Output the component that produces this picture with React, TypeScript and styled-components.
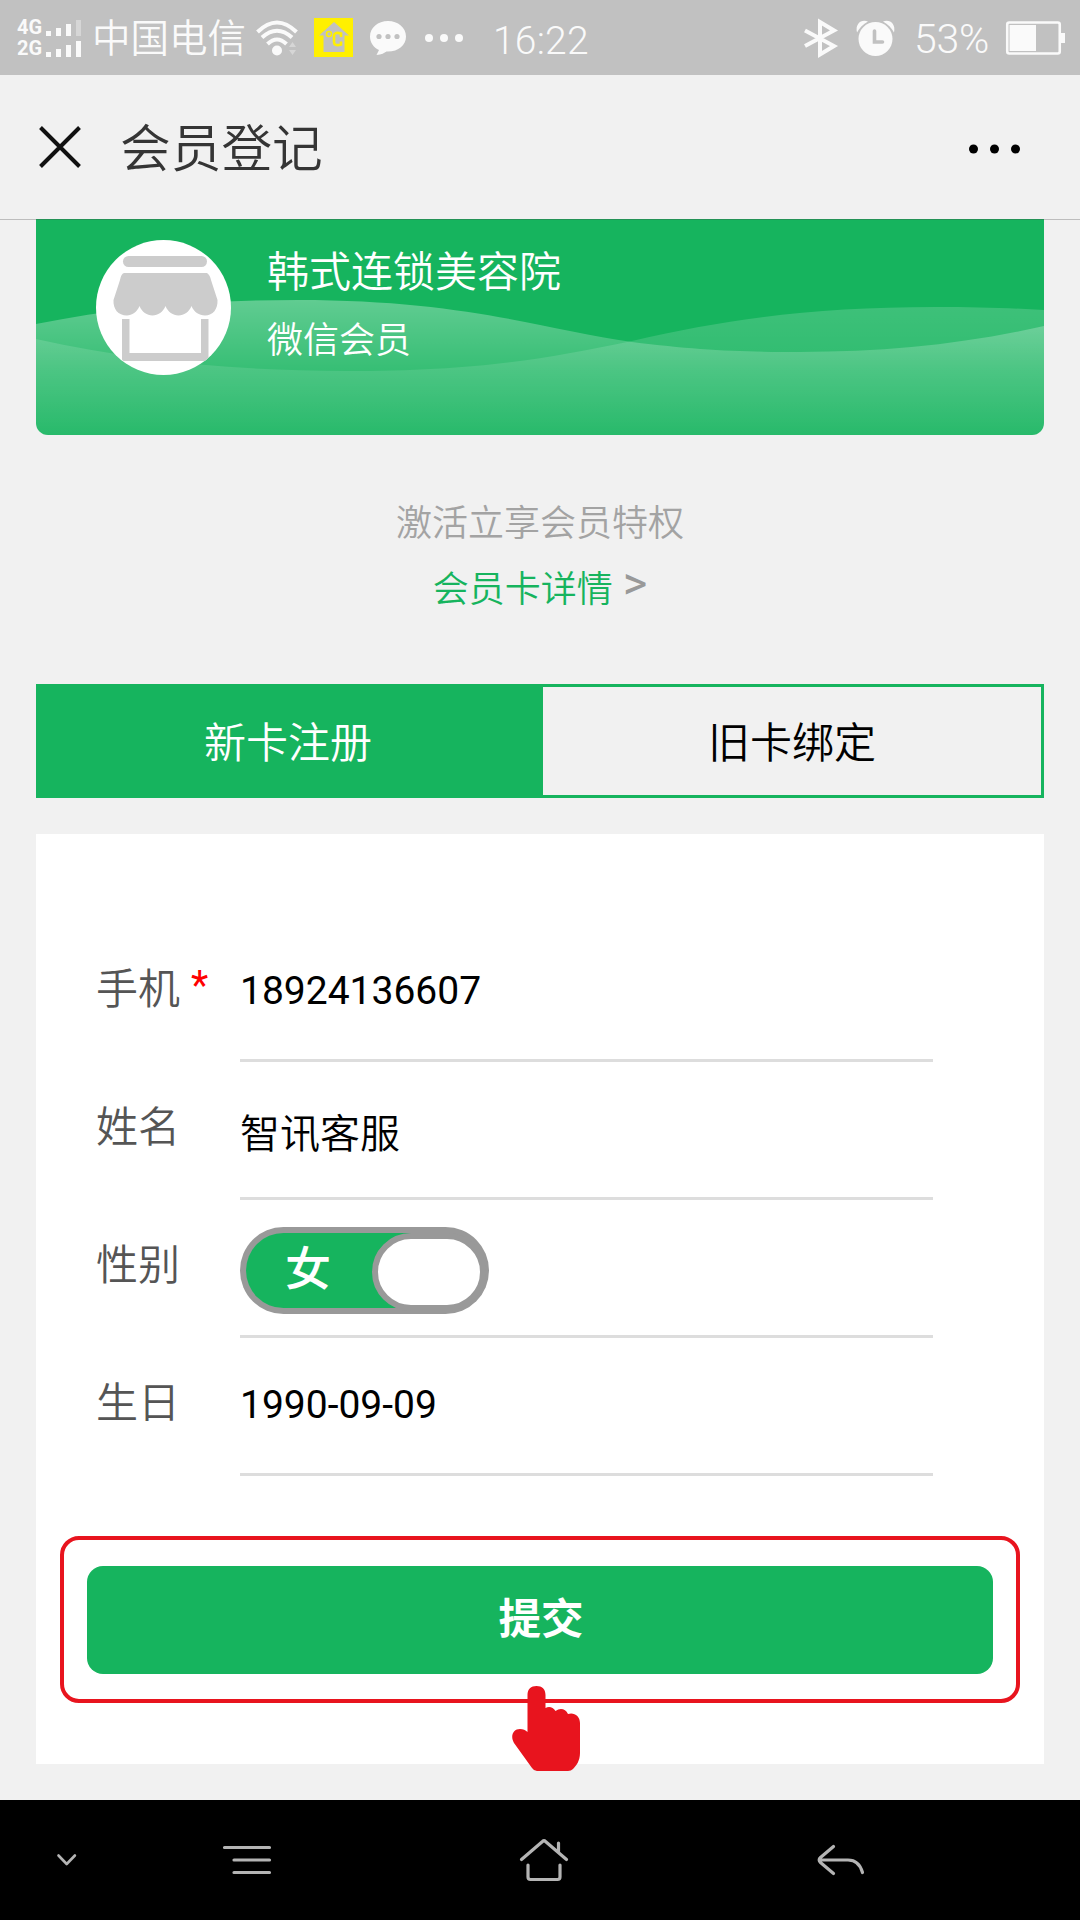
import React from "react";
import styled, { createGlobalStyle, css } from "styled-components";

const GREEN = "#16b45e";
const CJK = `"Noto Sans CJK SC", sans-serif`;
const LATIN = `Roboto, "Noto Sans CJK SC", sans-serif`;

const GlobalStyle = createGlobalStyle`
  * { box-sizing: border-box; }
  body { margin: 0; background: #f1f1f1; font-family: ${CJK}; }
`;

const Screen = styled.div`
  width: 1080px;
  height: 1920px;
  display: flex;
  flex-direction: column;
  background: #f1f1f1;
  overflow: hidden;
`;

const StatusBar = styled.div`
  height: 75px;
  flex: none;
  display: flex;
  align-items: center;
  justify-content: space-between;
  padding: 0 15px 0 17px;
  background: #c1c1c1;
  color: #fafafa;
`;

const StatusGroup = styled.div`
  display: flex;
  align-items: center;
  height: 75px;
`;

const Signals = styled.div`
  display: flex;
  flex-direction: column;
  gap: 4px;
  width: 75px;
`;

const Signal = styled.div`
  display: flex;
  align-items: flex-end;
  height: 17px;
`;

const Network = styled.span`
  width: 29px;
  font: 700 20px/17px ${LATIN};
`;

const Bar = styled.i<{ $h: number; $dim?: boolean }>`
  width: 5px;
  height: ${(p) => p.$h}px;
  margin-right: 5px;
  flex: none;
  background: ${(p) => (p.$dim ? "#d6d6d6" : "#fafafa")};
`;

const Carrier = styled.span`
  font-size: 38.5px;
  line-height: 53px;
  width: 164px;
  height: 58px;
  font-weight: 350;
`;

const Icon = styled.svg<{ $ml?: number }>`
  display: block;
  flex: none;
  margin-left: ${(p) => p.$ml ?? 0}px;
  overflow: visible;
`;

const Clock = styled.span`
  margin-left: 30px;
  padding-top: 6px;
  font: 300 39px/46px ${LATIN};
  letter-spacing: 0.2px;
`;

const Percent = styled.span`
  width: 92px;
  margin-left: 19px;
  padding-top: 3px;
  font: 300 41px/46px ${LATIN};
  letter-spacing: -0.3px;
`;

const Header = styled.header`
  position: relative;
  z-index: 1;
  height: 144px;
  flex: none;
  display: flex;
  align-items: center;
  padding: 0 60px 0 39px;
  box-shadow: 0 1px 0 rgba(70, 70, 70, 0.3);
`;

const Title = styled.h1`
  margin: -5px auto 0 39px;
  font-size: 50.7px;
  line-height: 72px;
  font-weight: 350;
  color: #353535;
`;

const Content = styled.main`
  flex: 1;
  padding: 0 36px;
`;

const MemberCard = styled.section`
  position: relative;
  height: 216px;
  display: flex;
  gap: 36px;
  padding: 21px 60px 0;
  background: ${GREEN};
  border-radius: 0 0 12px 12px;
  overflow: hidden;
`;

const Waves = styled.svg`
  position: absolute;
  left: 0;
  top: 1px;
`;

const Avatar = styled.div`
  position: relative;
  width: 135px;
  height: 135px;
  flex: none;
  border-radius: 50%;
  background: #fff;
  overflow: hidden;
`;

const CardText = styled.div`
  position: relative;
  margin-top: -1px;
  color: #fff;
  font-weight: 350;
`;

const ShopName = styled.div`
  font-size: 42px;
  line-height: 60px;
`;

const MemberType = styled.div`
  margin-top: 12px;
  font-size: 36px;
  line-height: 52px;
`;

const Promo = styled.div`
  display: flex;
  flex-direction: column;
  align-items: center;
  height: 249px;
  padding-top: 59px;
  font-size: 36px;
  line-height: 52px;
  font-weight: 350;
  color: #a3a3a3;
`;

const DetailLink = styled.a`
  display: flex;
  gap: 10px;
  margin-top: 14px;
  color: ${GREEN};
`;

const Arrow = styled.span`
  font: 400 47px/46px ${LATIN};
  color: #999;
`;

const Tabs = styled.div`
  display: flex;
  height: 114px;
  border: 3px solid ${GREEN};
`;

const Tab = styled.button<{ $active?: boolean }>`
  flex: ${(p) => (p.$active ? "0 0 504px" : "1")};
  border: 0;
  padding: ${(p) => (p.$active ? "0 6px 2px 0" : "0 0 2px")};
  font: 350 42px/60px ${CJK};
  ${(p) =>
    p.$active
      ? css`
          background: ${GREEN};
          color: #fff;
        `
      : css`
          background: transparent;
          color: #000;
        `}
`;

const Form = styled.form`
  height: 930px;
  margin-top: 36px;
  padding: 90px 24px 0;
  background: #fff;
`;

const Field = styled.div`
  display: flex;
  height: 138px;
  padding: 0 87px 0 36px;
`;

const Label = styled.label`
  width: 144px;
  flex: none;
  display: flex;
  gap: 11px;
  padding-top: 32px;
  font-size: 42px;
  line-height: 60px;
  font-weight: 350;
  color: #555;
`;

const Required = styled.span`
  font: 400 40px/60px ${LATIN};
  color: #f00;
`;

const Control = styled.div`
  flex: 1;
  border-bottom: 3px solid #ddd;
`;

const Value = styled.div<{ $cjk?: boolean }>`
  padding-top: ${(p) => (p.$cjk ? 40 : 43)}px;
  font: ${(p) => (p.$cjk ? `350 40px/58px ${CJK}` : `400 39px/48px ${LATIN}`)};
  color: #000;
`;

const Toggle = styled.div`
  width: 249px;
  height: 87px;
  margin-top: 27px;
  padding: 6px 3px 3px 6px;
  border-radius: 44px;
  background: #999;
`;

const ToggleTrack = styled.div`
  display: flex;
  justify-content: space-between;
  width: 240px;
  height: 75px;
  padding-left: 39px;
  border-radius: 38px;
  background: linear-gradient(90deg, ${GREEN} 165px, #999 165px);
  color: #fff;
  font-size: 46px;
  line-height: 64px;
  font-weight: 500;
`;

const Knob = styled.div`
  width: 114px;
  height: 78px;
  border: 6px solid #999;
  border-radius: 39px;
  background: #fff;
`;

const SubmitFrame = styled.div`
  position: relative;
  height: 167px;
  margin-top: 60px;
  padding: 26px 23px;
  border: 4px solid #e8141e;
  border-radius: 19px;
`;

const Submit = styled.button`
  display: block;
  width: 100%;
  height: 108px;
  border: 0;
  border-radius: 16px;
  padding: 0 0 9px 2px;
  background: ${GREEN};
  color: #fff;
  font: 700 42.5px/60px ${CJK};
`;

const Pointer = styled.svg`
  position: absolute;
  left: 448px;
  top: 146px;
`;

const NavBar = styled.nav`
  height: 120px;
  flex: none;
  display: flex;
  align-items: center;
  padding-left: 57px;
  background: #000;
  fill: none;
  stroke: #b4b4b4;
  stroke-width: 3.2;
  stroke-linecap: round;
  stroke-linejoin: round;
`;

export default function App() {
  return (
    <Screen>
      <GlobalStyle />
      <StatusBar>
        <StatusGroup>
          <Signals>
            <Signal>
              <Network>4G</Network>
              <Bar $h={5} />
              <Bar $h={8} />
              <Bar $h={12} />
              <Bar $h={16} $dim />
            </Signal>
            <Signal>
              <Network>2G</Network>
              <Bar $h={5} />
              <Bar $h={8} />
              <Bar $h={12} />
              <Bar $h={16} />
            </Signal>
          </Signals>
          <Carrier>中国电信</Carrier>
          <Icon width="42" height="36" viewBox="0 0 42 36" fill="none" stroke="#fafafa" strokeWidth="4">
            <path d="M1.500 12Q21-7 40.500 12M6 17.500Q21 4 36 17.500M11.500 24Q21 15 30.500 24" />
            <circle cx="21" cy="30.500" r="5" fill="#fafafa" stroke="none" />
            <path d="M33 27l3.500-5 3.500 5zM33 30l3.500 5 3.500-5z" fill="#d6d6d6" stroke="none" />
          </Icon>
          <Icon $ml={16} width="39" height="39" viewBox="0 0 39 39">
            <rect width="39" height="39" fill="#fff000" />
            <path d="M20 4L35 17.500H30.500V34H9.500V17.500H5z" fill="#c1c1c1" />
            <circle cx="15" cy="16" r="2.500" fill="none" stroke="#fff000" strokeWidth="1.500" />
            <path d="M27 19v-3.500q-7-2-7 2.500v6q0 4.500 7 2.500v-3" fill="none" stroke="#fff000" strokeWidth="2.600" />
          </Icon>
          <Icon $ml={17} width="36" height="36" viewBox="0 0 36 36">
            <path d="M18 1C8 1 0 7.500 0 16.500c0 6 3.500 11 9 13.500l-2.500 5c5-.5 8-2 10-3.500C28 32 36 25.500 36 16.500 36 7.500 28 1 18 1z" fill="#fafafa" />
            <g fill="#c1c1c1">
              <circle cx="9" cy="16.500" r="2.600" />
              <circle cx="18" cy="16.500" r="2.600" />
              <circle cx="27" cy="16.500" r="2.600" />
            </g>
          </Icon>
          <Icon $ml={19} width="38" height="8" viewBox="0 0 38 8" fill="#fafafa">
            <circle cx="4" cy="4" r="4" />
            <circle cx="19" cy="4" r="4" />
            <circle cx="34" cy="4" r="4" />
          </Icon>
          <Clock>16:22</Clock>
        </StatusGroup>
        <StatusGroup>
          <Icon width="33" height="38" viewBox="0 0 33 38" fill="none" stroke="#fafafa" strokeWidth="4">
            <path d="M1 11.500L30 27 16 35.500V3L30 11.500 1 27" />
          </Icon>
          <Icon $ml={19} width="39" height="38" viewBox="0 0 39 38">
            <circle cx="19.500" cy="20" r="17" fill="#fafafa" />
            <path d="M1 13.500C-1 5 5 0 12 2.500 7 5 3.500 9 1 13.500zM38 13.500C40 5 34 0 27 2.500 32 5 35.500 9 38 13.500z" fill="#fafafa" />
            <path d="M18.500 12v11h8" fill="none" stroke="#c1c1c1" strokeWidth="3.600" strokeLinecap="round" />
          </Icon>
          <Percent>53%</Percent>
          <Icon width="59" height="34" viewBox="0 0 59 34">
            <rect x="1.250" y="1.500" width="52.500" height="31" rx="2" fill="none" stroke="#fafafa" strokeWidth="2.600" />
            <rect x="3.500" y="4" width="26.500" height="26" fill="#fafafa" />
            <rect x="55" y="12" width="4" height="10" fill="#fafafa" />
          </Icon>
        </StatusGroup>
      </StatusBar>

      <Header>
        <Icon width="42" height="42" viewBox="0 0 42 42" stroke="#111" strokeWidth="4">
          <path d="M1.500 1.500l39 39M40.500 1.500l-39 39" />
        </Icon>
        <Title>会员登记</Title>
        <Icon width="51" height="9" viewBox="0 0 51 9" fill="#000">
          <circle cx="4.500" cy="6" r="4.500" />
          <circle cx="25.500" cy="6" r="4.500" />
          <circle cx="46.500" cy="6" r="4.500" />
        </Icon>
      </Header>

      <Content>
        <MemberCard>
          <Waves width="1008" height="215" viewBox="0 0 1008 215">
            <defs>
              <linearGradient id="waveFront" gradientUnits="userSpaceOnUse" x1="0" y1="80" x2="0" y2="215">
                <stop offset="0" stopColor="#fff" stopOpacity=".32" />
                <stop offset=".52" stopColor="#fff" stopOpacity=".14" />
                <stop offset="1" stopColor="#fff" stopOpacity=".04" />
              </linearGradient>
              <linearGradient id="waveBack" gradientUnits="userSpaceOnUse" x1="0" y1="87" x2="0" y2="215">
                <stop offset="0" stopColor="#fff" stopOpacity=".17" />
                <stop offset="1" stopColor="#fff" stopOpacity=".04" />
              </linearGradient>
            </defs>
            <path d="M0 104C80 88 165 80 262 80C430 80 510 110 596 122C660 130 700 132 764 132C850 132 930 124 1008 106V215H0z" fill="url(#waveFront)" />
            <path d="M0 119C100 141 200 151 310 151C440 151 510 139 596 121C690 99 780 87 900 87C940 87 975 88 1008 90V215H0z" fill="url(#waveBack)" />
          </Waves>
          <Avatar>
            <Icon width="135" height="135" viewBox="0 0 135 135" fill="#ccc">
              <rect x="27" y="16" width="84" height="11" rx="5.500" />
              <path d="M28 33H111Q114 35 115 40L121.500 60C122 69 117 75.500 109 75.500C103 75.500 98 72 95.500 66C93 72 88 75.500 82.500 75.500C77 75.500 72 72 69.500 66C67 72 62 75.500 56.500 75.500C51 75.500 46 72 43.500 66C41 72 36 75.500 31 75.500C22 75.500 17 69 17.500 60L24 40Q25 34 28 33z" />
              <path d="M26 79h7.500v34H105V79h7.500v40q0 2-3 2H29q-3 0-3-2z" />
            </Icon>
          </Avatar>
          <CardText>
            <ShopName>韩式连锁美容院</ShopName>
            <MemberType>微信会员</MemberType>
          </CardText>
        </MemberCard>

        <Promo>
          <div>激活立享会员特权</div>
          <DetailLink>
            会员卡详情<Arrow>&gt;</Arrow>
          </DetailLink>
        </Promo>

        <Tabs>
          <Tab $active>新卡注册</Tab>
          <Tab>旧卡绑定</Tab>
        </Tabs>

        <Form>
          <Field>
            <Label>
              手机<Required>*</Required>
            </Label>
            <Control>
              <Value>18924136607</Value>
            </Control>
          </Field>
          <Field>
            <Label>姓名</Label>
            <Control>
              <Value $cjk>智讯客服</Value>
            </Control>
          </Field>
          <Field>
            <Label>性别</Label>
            <Control>
              <Toggle>
                <ToggleTrack>
                  女<Knob />
                </ToggleTrack>
              </Toggle>
            </Control>
          </Field>
          <Field>
            <Label>生日</Label>
            <Control>
              <Value>1990-09-09</Value>
            </Control>
          </Field>
          <SubmitFrame>
            <Submit type="button">提交</Submit>
            <Pointer width="68" height="85" viewBox="0 0 68 85" fill="#e8141e">
              <path d="M15.500 9C15.500 3 19 0 24.500 0C30 0 33.500 3 33.500 9V22C37 20 41 21 43.500 25C48 21.500 53.500 22.500 56 28C62 26 68 30 68 37V67C68 75 64 80 61 83Q59 85 56 85H25Q22 85 20 82L2 57C-2 50 1 43 8 43C11 43 13.500 44 15.500 46z" />
            </Pointer>
          </SubmitFrame>
        </Form>
      </Content>

      <NavBar>
        <Icon width="20" height="12" viewBox="0 0 20 12" strokeWidth="2.600">
          <path d="M1.500 1.500L9.700 10l8.200-8.500" />
        </Icon>
        <Icon $ml={146} width="48" height="30" viewBox="0 0 48 30">
          <path d="M1.500 2.500H46.500M11 15H46.500M11 27.500H46.500" />
        </Icon>
        <Icon $ml={249} width="48" height="42" viewBox="0 0 48 42">
          <path d="M1.500 20.500L22.500 2.500Q24 1 25.500 2.500L46.500 20.500M38.500 4v9M8 26v12q0 2.500 2.500 2.500h27q2.500 0 2.500-2.500V26" />
        </Icon>
        <Icon $ml={250} width="47" height="30" viewBox="0 0 47 30">
          <path d="M15.500 1.500L2.500 12.500Q0 15 2.500 17.500L15.500 28.500M2 15H30Q41 15 44.500 27.500" />
        </Icon>
      </NavBar>
    </Screen>
  );
}
